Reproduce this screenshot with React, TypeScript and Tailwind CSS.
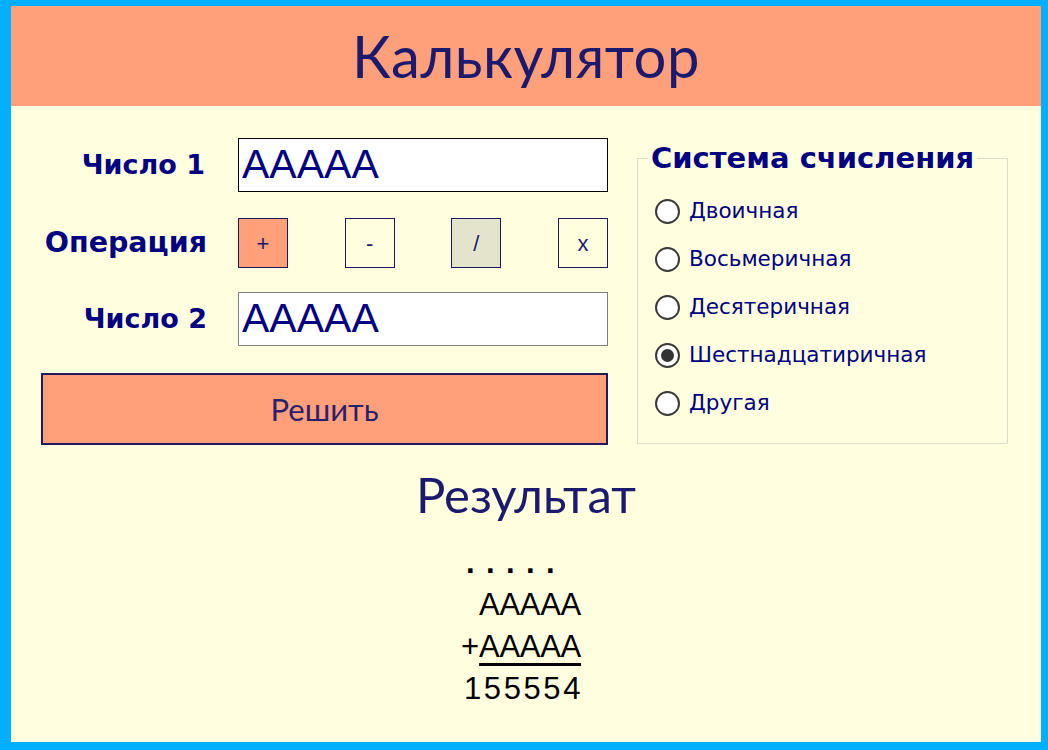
import { useState } from "react";

const ops = ["+", "-", "/", "x"];
const systems = ["Двоичная", "Восьмеричная", "Десятеричная", "Шестнадцатиричная", "Другая"];

const thin = "font-['Century_Gothic','Lato','Noto_Sans',sans-serif]";
const wide = "font-['Century_Gothic','DejaVu_Sans','Noto_Sans',sans-serif]";
const plain = "font-['Liberation_Sans',Arial,sans-serif]";

function Radio({ label, checked, onPick }: { label: string; checked: boolean; onPick: () => void }) {
  return (
    <label className="flex h-[48px] items-center gap-[9px] cursor-pointer" onClick={onPick}>
      <span className="flex size-[25px] items-center justify-center rounded-full border-2 border-[#3a3a3a] bg-white">
        {checked && <span className="size-[13px] rounded-full bg-[#333]" />}
      </span>
      <span className={`${wide} text-[21.5px] text-[#000080]`}>{label}</span>
    </label>
  );
}

export default function App() {
  const [op, setOp] = useState("+");
  const [sys, setSys] = useState("Шестнадцатиричная");

  return (
    <div className="h-[750px] w-[1048px] bg-[#00b0ff] pt-[6px] pl-[11px] pr-[7px] pb-[8px]">
      <div className="flex h-full flex-col bg-[#ffffe0]">
        {/* Шапка */}
        <div className="flex h-[100px] items-center justify-center bg-[#ffa07a]">
          <h1 className={`${thin} text-[58px] leading-none text-[#1c1a6e] tracking-[0.5px]`}>Калькулятор</h1>
        </div>

        <div className="flex gap-[29px] pl-[30px] pr-[33px] pt-[32px]">
          {/* Левая колонка */}
          <div className="flex w-[567px] flex-col">
            <div className="grid grid-cols-[166px_370px] items-center gap-x-[31px]">
              <span className={`${wide} text-right text-[27px] font-bold text-[#000080] pr-[2px]`}>Число 1</span>
              <input
                defaultValue="AAAAA"
                className={`${plain} h-[54px] w-[370px] border border-black bg-white px-[3px] text-[41px] text-[#000080] outline-none`}
              />
            </div>

            <div className="mt-[26px] grid grid-cols-[166px_370px] items-center gap-x-[31px]">
              <span className={`${wide} text-right text-[28.5px] font-bold text-[#000080]`}>Операция</span>
              <div className="flex justify-between">
                {ops.map((o) => (
                  <button
                    key={o}
                    onClick={() => setOp(o)}
                    className={`${plain} size-[50px] border border-[#1c1a5e] text-[22px] text-[#1c1a6e] ${
                      o === op ? "bg-[#ffa07a]" : o === "/" ? "bg-[#e4e4cc]" : "bg-transparent"
                    }`}
                  >
                    {o}
                  </button>
                ))}
              </div>
            </div>

            <div className="mt-[24px] grid grid-cols-[166px_370px] items-center gap-x-[31px]">
              <span className={`${wide} text-right text-[27px] font-bold text-[#000080]`}>Число 2</span>
              <input
                defaultValue="AAAAA"
                className={`${plain} h-[54px] w-[370px] border border-[#808080] bg-white px-[3px] text-[41px] text-[#000080] outline-none`}
              />
            </div>

            <button className={`${thin} mt-[27px] h-[72px] w-full border-2 border-[#231a5e] bg-[#ffa07a] text-[31px] text-[#2b1f6e]`}>
              Решить
            </button>
          </div>

          {/* Система счисления */}
          <fieldset className="mt-[4px] h-[302px] w-[371px] border border-[#dcdccc] px-[17px] pb-[10px]">
            <legend className={`${wide} ml-[-7px] px-[3px] text-[29px] font-bold leading-[32px] text-[#000080]`}>
              Система счисления
            </legend>
            <div className="mt-[13px] flex flex-col">
              {systems.map((s) => (
                <Radio key={s} label={s} checked={s === sys} onPick={() => setSys(s)} />
              ))}
            </div>
          </fieldset>
        </div>

        {/* Результат */}
        <div className="mt-[24px] flex flex-col items-center">
          <h2 className={`${thin} text-[49px] leading-[50px] text-[#1c1a6e]`}>Результат</h2>
          <div className={`${plain} mt-[23px] ml-[-10px] flex w-[120px] flex-col text-[31px] leading-[42px] text-black`}>
            <div className="flex pl-[5px] font-bold">
              {[0, 1, 2, 3, 4].map((i) => (
                <span key={i} className="w-[20px]">.</span>
              ))}
            </div>
            <span className="text-right tracking-[-0.3px]">AAAAA</span>
            <span className="text-right">
              +<span className="tracking-[-0.3px] underline decoration-[3px] underline-offset-[6px]">AAAAA</span>
            </span>
            <span className="text-right tracking-[2.6px] mr-[-2px]">155554</span>
          </div>
        </div>
      </div>
    </div>
  );
}
